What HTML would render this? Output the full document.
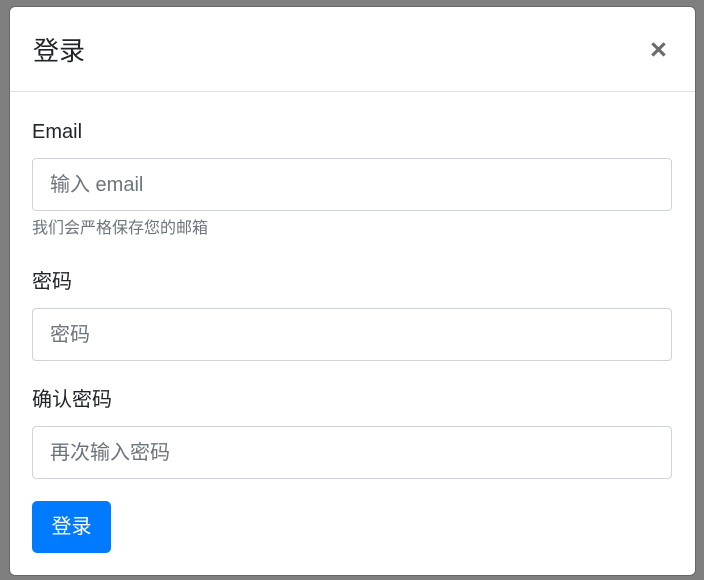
<!DOCTYPE html>
<html><head><meta charset="utf-8"><style>
*{box-sizing:border-box;margin:0;padding:0}
body{width:704px;height:580px;background:#7f7f7f;font-family:"Liberation Sans","Noto Sans CJK SC",sans-serif;color:#212529;position:relative;overflow:hidden}
.m{position:absolute;left:9px;top:6px;width:687px;height:570px;background:#fff;border-radius:6px;border:1px solid #666}
.hd{position:absolute;left:0;top:0;right:0;height:85px;border-bottom:1px solid #dee2e6}
.t{position:absolute;left:23px;top:28px;font-size:26px;line-height:32px}
.x{position:absolute;left:640px;top:28px;font-size:29px;font-weight:bold;color:#6c6c6c;line-height:30px}
.a{position:absolute;font-size:20px;line-height:24px;left:32px}
.in{position:absolute;left:32px;width:640px;height:53px;border:1px solid #ced4da;border-radius:4px;font-size:20px;color:#6c757d;padding:13px 17px;line-height:26px}
.s{position:absolute;left:32px;top:219px;font-size:16px;color:#6c757d;line-height:20px}
.b{position:absolute;left:32px;top:501px;width:79px;height:52px;background:#007bff;color:#fff;border-radius:5px;font-size:20px;text-align:center;line-height:52px}
</style></head><body>
<div class="m"><div class="hd"><div class="t">登录</div><div class="x">×</div></div></div>
<div class="a" style="top:120px">Email</div>
<div class="in" style="top:158px">输入 email</div>
<div class="s">我们会严格保存您的邮箱</div>
<div class="a" style="top:270px">密码</div>
<div class="in" style="top:308px">密码</div>
<div class="a" style="top:388px">确认密码</div>
<div class="in" style="top:426px">再次输入密码</div>
<div class="b">登录</div>
</body></html>
